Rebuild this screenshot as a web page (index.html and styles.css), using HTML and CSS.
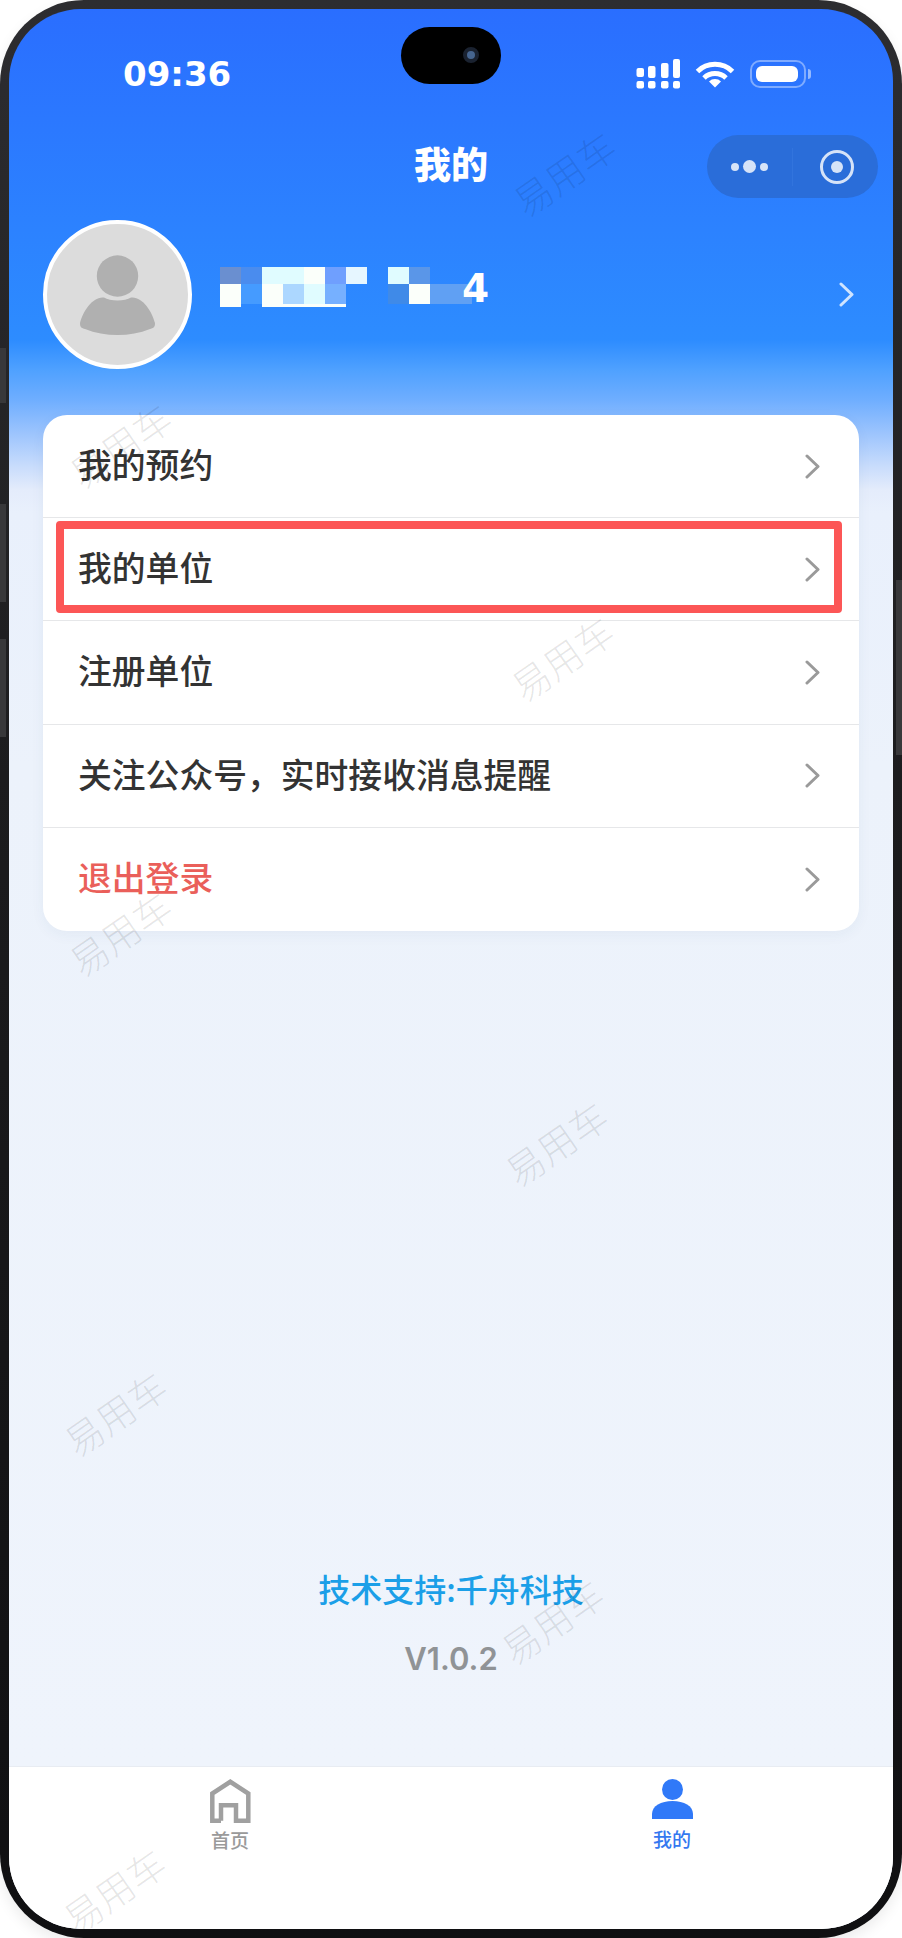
FILE: index.html
```html
<!DOCTYPE html>
<html lang="zh-CN">
<head>
    <meta charset="UTF-8">
    <meta name="viewport" content="width=device-width, initial-scale=1.0">
    <title>我的</title>
    <link rel="stylesheet" href="styles.css">
</head>
<body>
    <div class="phone">
        <span class="side-key key-left-0"></span>
        <span class="side-key key-left-1"></span>
        <span class="side-key key-left-2"></span>
        <span class="side-key key-right"></span>
        <div class="screen">
            <div class="status">
                <span class="time">09:36</span>
                <div class="status-icons">
                    <svg class="signal" width="44" height="30" viewBox="0 0 44 30" fill="#fff">
                        <rect x="0.5" y="9" width="7.5" height="9" rx="2"/>
                        <rect x="12" y="7" width="7.5" height="12" rx="2"/>
                        <rect x="25" y="4" width="7.5" height="15" rx="2"/>
                        <rect x="37" y="0" width="7" height="19" rx="2"/>
                        <rect x="0.5" y="22" width="7.5" height="7.5" rx="2"/>
                        <rect x="12" y="22" width="7.5" height="7.5" rx="2"/>
                        <rect x="25" y="22" width="7.5" height="7.5" rx="2"/>
                        <rect x="37" y="22" width="7" height="7.5" rx="2"/>
                    </svg>
                    <svg class="wifi" width="40" height="28" viewBox="0 0 40 28" fill="none" stroke="#fff" stroke-width="5">
                        <path d="M2.5 11.5A25 25 0 0 1 37.5 11.5"/>
                        <path d="M9 18A16 16 0 0 1 31 18"/>
                        <path d="M14 21.5A8.5 8.5 0 0 1 26 21.5L20 27.5Z" fill="#fff" stroke="none"/>
                    </svg>
                    <div class="battery"><span class="battery-level"></span></div>
                </div>
            </div>
            <div class="notch"><span class="camera"></span></div>

            <div class="nav">
                <span></span>
                <h1 class="title">我的</h1>
                <div class="capsule">
                    <div class="capsule-dots">
                        <span class="dot"></span>
                        <span class="dot dot-big"></span>
                        <span class="dot"></span>
                    </div>
                    <span class="capsule-line"></span>
                    <div class="capsule-close"><span></span></div>
                </div>
            </div>

            <div class="profile">
                <div class="avatar">
                    <svg width="75" height="80" viewBox="0 0 75 80" fill="#b0b0b0">
                        <circle cx="37.5" cy="21" r="20.7"/>
                        <path d="M24 42.500C30 46.500 45 46.500 51 42.500C62 41 72 56 75 68C75 73 73 73 70 74C50 82 25 82 5 74C2 73 0 73 0 68C3 56 13 41 24 42.500Z"/>
                    </svg>
                </div>
                <div class="name">
                    <div class="mosaic">
                        <span class="c1"></span><span class="c2"></span><span class="c3"></span><span class="c3"></span><span class="c4"></span><span class="c5"></span><span class="c6"></span><span></span><span class="c3"></span><span class="c7"></span><span></span><span></span>
                        <span class="c4"></span><span class="c8"></span><span class="c4"></span><span class="c9"></span><span class="c3"></span><span class="c10"></span><span></span><span></span><span class="c11"></span><span class="c4"></span><span class="c12"></span><span class="c12"></span>
                        <span class="c4"></span><span></span><span class="c4"></span><span class="c4"></span><span class="c4"></span><span class="c4"></span><span></span><span></span><span></span><span></span><span></span><span></span>
                    </div>
                    <span class="name-end">4</span>
                </div>
                <svg class="profile-arrow" width="15" height="25" viewBox="0 0 15 25" fill="none" stroke="#cfe4ff" stroke-width="3" stroke-linecap="round" stroke-linejoin="round">
                    <path d="M2 2L13 12.500L2 23"/>
                </svg>
            </div>

            <div class="card">
                <a class="row">
                    <span>我的预约</span>
                    <svg width="15" height="25" viewBox="0 0 15 25" fill="none" stroke="#9a9a9a" stroke-width="3" stroke-linecap="round" stroke-linejoin="round"><path d="M2 2L13 12.500L2 23"/></svg>
                </a>
                <a class="row">
                    <span>我的单位</span>
                    <svg width="15" height="25" viewBox="0 0 15 25" fill="none" stroke="#9a9a9a" stroke-width="3" stroke-linecap="round" stroke-linejoin="round"><path d="M2 2L13 12.500L2 23"/></svg>
                </a>
                <a class="row">
                    <span>注册单位</span>
                    <svg width="15" height="25" viewBox="0 0 15 25" fill="none" stroke="#9a9a9a" stroke-width="3" stroke-linecap="round" stroke-linejoin="round"><path d="M2 2L13 12.500L2 23"/></svg>
                </a>
                <a class="row">
                    <span>关注公众号，实时接收消息提醒</span>
                    <svg width="15" height="25" viewBox="0 0 15 25" fill="none" stroke="#9a9a9a" stroke-width="3" stroke-linecap="round" stroke-linejoin="round"><path d="M2 2L13 12.500L2 23"/></svg>
                </a>
                <a class="row row-logout">
                    <span>退出登录</span>
                    <svg width="15" height="25" viewBox="0 0 15 25" fill="none" stroke="#9a9a9a" stroke-width="3" stroke-linecap="round" stroke-linejoin="round"><path d="M2 2L13 12.500L2 23"/></svg>
                </a>
                <div class="highlight"></div>
            </div>

            <div class="credits">
                <p class="support">技术支持:千舟科技</p>
                <p class="version">V1.0.2</p>
            </div>

            <div class="tabbar">
                <a class="tab">
                    <svg width="41" height="44" viewBox="0 0 41 44" fill="none" stroke="#a0a0a0" stroke-width="4.500">
                        <path d="M11 41.800V26.300H26V41.800H38.300V14.500L20.300 2.800L2.300 14.500V41.800H11"/>
                    </svg>
                    <span class="tab-label">首页</span>
                </a>
                <a class="tab tab-active">
                    <svg width="41" height="40" viewBox="0 0 41 40" fill="#3079f8">
                        <circle cx="20.500" cy="10.500" r="10.500"/>
                        <path d="M0 40V35C0 27 9 22 20.500 22C32 22 41 27 41 35V40Z"/>
                    </svg>
                    <span class="tab-label">我的</span>
                </a>
            </div>

            <div class="marks">
                <span class="mark mark-1">易用车</span>
                <span class="mark mark-2">易用车</span>
                <span class="mark mark-3">易用车</span>
                <span class="mark mark-4">易用车</span>
                <span class="mark mark-5">易用车</span>
                <span class="mark mark-6">易用车</span>
                <span class="mark mark-7">易用车</span>
                <span class="mark mark-8">易用车</span>
            </div>
        </div>
    </div>
</body>
</html>
```

FILE: styles.css
```css
* {
    box-sizing: border-box;
}
body {
    font-family: "Noto Sans CJK SC", "Noto Sans", sans-serif;
    margin: 0;
    padding: 0;
    background-color: #fff;
}
h1, p {
    margin: 0;
}

/* frame */
.phone {
    position: relative;
    width: 902px;
    height: 1938px;
    padding: 9px;
    border-radius: 84px;
    background: linear-gradient(180deg, #2d2d30 0%, #1c1c1e 40%, #101012 100%);
    box-shadow: 0 6px 14px rgba(0, 0, 0, 0.08);
}
.side-key {
    position: absolute;
    width: 6px;
    background-color: #38383a;
}
.key-left-0 {
    left: 0;
    top: 348px;
    height: 55px;
}
.key-left-1 {
    left: 0;
    top: 504px;
    height: 98px;
}
.key-left-2 {
    left: 0;
    top: 639px;
    height: 98px;
}
.key-right {
    right: 0;
    top: 580px;
    height: 175px;
}
.screen {
    position: relative;
    display: flex;
    flex-direction: column;
    height: 1920px;
    overflow: hidden;
    border-radius: 72px;
    background: linear-gradient(180deg, #2a6eff 0, #2d8cff 331px, #4fa1ff 361px, #6faeff 391px, #9cc4fd 424px, #c8dcfc 457px, #e4ecfb 481px, #e9f0fc 504px, #ecf2fb 760px, #eff4fc 1757px);
}

/* status bar */
.status {
    display: flex;
    justify-content: space-between;
    align-items: center;
    height: 126px;
    padding: 50px 87px 46px 114px;
    color: #fff;
}
.time {
    font-family: "DejaVu Sans", sans-serif;
    font-size: 34px;
    font-weight: bold;
    line-height: 30px;
}
.status-icons {
    display: flex;
    align-items: center;
}
.wifi {
    margin-left: 15px;
}
.battery {
    position: relative;
    width: 56px;
    height: 28px;
    margin-left: 15px;
    padding: 4px;
    border: 2px solid rgba(255, 255, 255, 0.4);
    border-radius: 10px;
}
.battery::after {
    content: "";
    position: absolute;
    right: -7px;
    top: 7px;
    width: 3px;
    height: 10px;
    border-radius: 0 3px 3px 0;
    background-color: rgba(255, 255, 255, 0.5);
}
.battery-level {
    display: block;
    width: 42px;
    height: 100%;
    border-radius: 6px;
    background-color: #fff;
}
.notch {
    position: absolute;
    left: 392px;
    top: 18px;
    width: 100px;
    height: 57px;
    border-radius: 29px;
    background-color: #000;
}
.camera {
    position: absolute;
    left: 62px;
    top: 20px;
    width: 16px;
    height: 16px;
    border: 4px solid #1a2230;
    border-radius: 50%;
    background-color: #46658f;
}

/* nav */
.nav {
    display: grid;
    grid-template-columns: 1fr auto 1fr;
    align-items: center;
    height: 63px;
    padding: 0 15px;
}
.title {
    margin-top: -7px;
    font-size: 37px;
    font-weight: 900;
    line-height: 1;
    color: #fff;
}
.capsule {
    justify-self: end;
    display: flex;
    align-items: center;
    width: 171px;
    height: 63px;
    border-radius: 32px;
    background-color: #2a6dd9;
}
.capsule-dots {
    display: flex;
    align-items: center;
    justify-content: center;
    gap: 4px;
    width: 85px;
}
.dot {
    width: 8px;
    height: 8px;
    border-radius: 50%;
    background-color: #d6e3f8;
}
.dot-big {
    width: 13px;
    height: 13px;
}
.capsule-line {
    width: 1px;
    height: 38px;
    background-color: #3274dd;
}
.capsule-close {
    display: flex;
    align-items: center;
    justify-content: center;
    width: 34px;
    height: 34px;
    margin-left: 27px;
    border: 3.500px solid #d6e3f8;
    border-radius: 50%;
}
.capsule-close span {
    width: 12px;
    height: 12px;
    border-radius: 50%;
    background-color: #d6e3f8;
}

/* profile */
.profile {
    display: flex;
    align-items: center;
    margin-top: 22px;
    padding: 0 39px 0 34px;
}
.avatar {
    display: flex;
    align-items: center;
    justify-content: center;
    width: 149px;
    height: 149px;
    border: 4px solid #fff;
    border-radius: 50%;
    background-color: #dcdcdc;
}
.name {
    display: flex;
    align-items: flex-end;
    flex: 1;
    margin-left: 28px;
    margin-top: -16px;
}
.mosaic {
    display: grid;
    grid-template-columns: repeat(12, 21px);
    grid-template-rows: 17px 20px 3px;
}
.c1 { background-color: #6a8fd0; }
.c2 { background-color: #4a8cee; }
.c3 { background-color: #e0fcff; }
.c4 { background-color: #fbfffa; }
.c5 { background-color: #6f9ffe; }
.c6 { background-color: #e6f6ff; }
.c7 { background-color: #5a96e8; }
.c8 { background-color: #459bff; }
.c9 { background-color: #acd7ff; }
.c10 { background-color: #76b0ff; }
.c11 { background-color: #3f8ae8; }
.c12 { background-color: #60a0f3; }
.name-end {
    margin-left: -10px;
    font-family: "DejaVu Sans", sans-serif;
    font-size: 39px;
    font-weight: bold;
    line-height: 36px;
    color: #fff;
}

/* menu card */
.card {
    position: relative;
    margin: 46px 34px 0;
    overflow: hidden;
    border-radius: 24px;
    background-color: #fff;
    box-shadow: 0 4px 14px rgba(40, 70, 120, 0.05);
}
.row {
    display: flex;
    align-items: center;
    justify-content: space-between;
    height: 103.200px;
    padding: 0 39px 0 35px;
    border-bottom: 1px solid #e6e7e9;
    font-size: 33.800px;
    font-weight: 500;
    color: #333;
}
.row span {
    margin-bottom: 5px;
}
.row-logout {
    border-bottom: none;
    color: #ea5f5a;
}
.highlight {
    position: absolute;
    left: 13px;
    right: 17px;
    top: 106px;
    height: 92px;
    border: 8.500px solid #fc5656;
    border-radius: 4px;
}

/* footer */
.credits {
    display: flex;
    flex-direction: column;
    align-items: center;
    margin-top: auto;
    padding-bottom: 89px;
}
.support {
    font-size: 32px;
    font-weight: 500;
    line-height: 40px;
    color: #1b9fe8;
}
.version {
    margin-top: 33px;
    font-family: Inter, sans-serif;
    font-size: 31px;
    font-weight: 600;
    line-height: 36px;
    color: #909396;
}

/* tab bar */
.tabbar {
    display: flex;
    height: 163px;
    padding-top: 12px;
    border-top: 1px solid #e8ecf2;
    background-color: #fff;
}
.tab {
    display: flex;
    flex: 1;
    flex-direction: column;
    align-items: center;
}
.tab-label {
    margin-top: 4px;
    font-size: 19px;
    font-weight: 500;
    line-height: 26px;
    color: #9a9a9a;
}
.tab-active .tab-label {
    margin-top: 7px;
    color: #3478f0;
}

/* watermark */
.marks {
    position: absolute;
    inset: 0;
    pointer-events: none;
}
.mark {
    position: absolute;
    font-size: 38px;
    font-weight: 300;
    line-height: 1;
    white-space: nowrap;
    color: rgba(0, 0, 0, 0.1);
    transform: translate(-50%, -50%) rotate(-35deg);
}
.mark-1 { left: 555px; top: 164px; }
.mark-2 { left: 111px; top: 436px; }
.mark-3 { left: 553px; top: 649px; }
.mark-4 { left: 111px; top: 924px; }
.mark-5 { left: 547px; top: 1134px; }
.mark-6 { left: 106px; top: 1404px; }
.mark-7 { left: 543px; top: 1612px; }
.mark-8 { left: 105px; top: 1881px; }
```
